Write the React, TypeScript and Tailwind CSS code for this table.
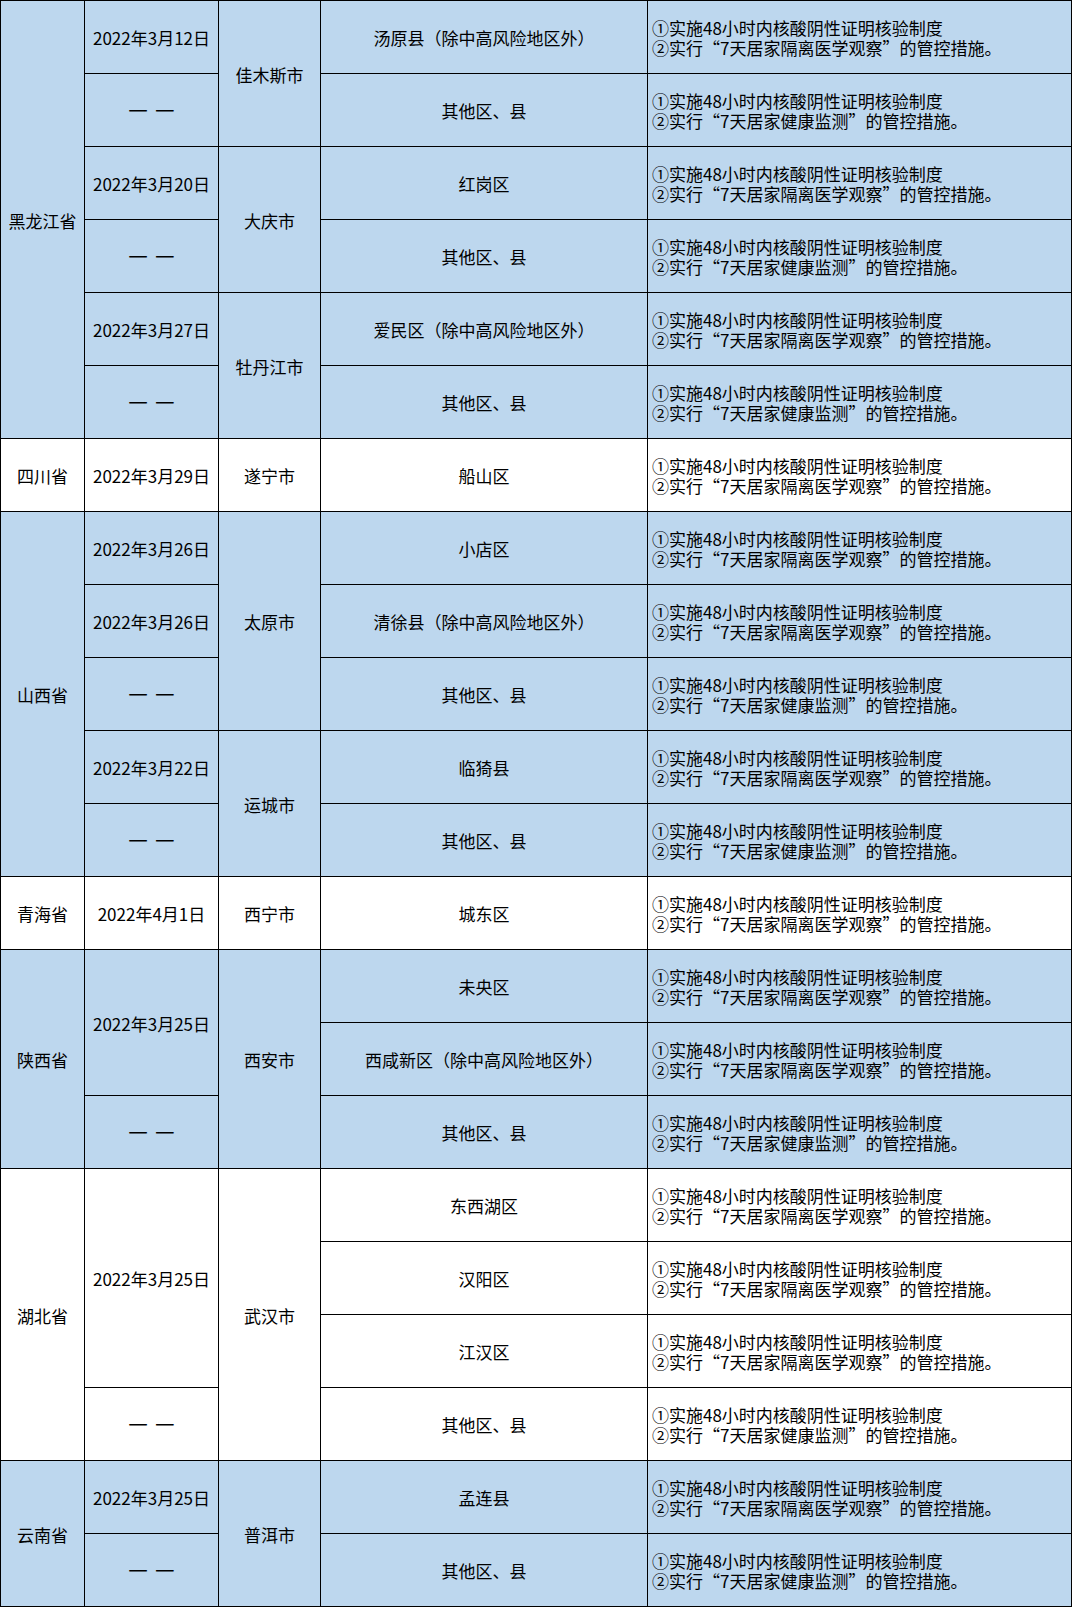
const A = ["①实施48小时内核酸阴性证明核验制度", "②实行“7天居家隔离医学观察”的管控措施。"];
const B = ["①实施48小时内核酸阴性证明核验制度", "②实行“7天居家健康监测”的管控措施。"];

type Cell = { text: string; rs?: number };
type Row = {
  white?: boolean;
  prov?: Cell;
  date?: Cell;
  city?: Cell;
  area: string;
  rule: string[];
};

const rows: Row[] = [
  { prov: { text: "黑龙江省", rs: 6 }, date: { text: "2022年3月12日" }, city: { text: "佳木斯市", rs: 2 }, area: "汤原县（除中高风险地区外）", rule: A },
  { date: { text: "——" }, area: "其他区、县", rule: B },
  { date: { text: "2022年3月20日" }, city: { text: "大庆市", rs: 2 }, area: "红岗区", rule: A },
  { date: { text: "——" }, area: "其他区、县", rule: B },
  { date: { text: "2022年3月27日" }, city: { text: "牡丹江市", rs: 2 }, area: "爱民区（除中高风险地区外）", rule: A },
  { date: { text: "——" }, area: "其他区、县", rule: B },
  { white: true, prov: { text: "四川省" }, date: { text: "2022年3月29日" }, city: { text: "遂宁市" }, area: "船山区", rule: A },
  { prov: { text: "山西省", rs: 5 }, date: { text: "2022年3月26日" }, city: { text: "太原市", rs: 3 }, area: "小店区", rule: A },
  { date: { text: "2022年3月26日" }, area: "清徐县（除中高风险地区外）", rule: A },
  { date: { text: "——" }, area: "其他区、县", rule: B },
  { date: { text: "2022年3月22日" }, city: { text: "运城市", rs: 2 }, area: "临猗县", rule: A },
  { date: { text: "——" }, area: "其他区、县", rule: B },
  { white: true, prov: { text: "青海省" }, date: { text: "2022年4月1日" }, city: { text: "西宁市" }, area: "城东区", rule: A },
  { prov: { text: "陕西省", rs: 3 }, date: { text: "2022年3月25日", rs: 2 }, city: { text: "西安市", rs: 3 }, area: "未央区", rule: A },
  { area: "西咸新区（除中高风险地区外）", rule: A },
  { date: { text: "——" }, area: "其他区、县", rule: B },
  { white: true, prov: { text: "湖北省", rs: 4 }, date: { text: "2022年3月25日", rs: 3 }, city: { text: "武汉市", rs: 4 }, area: "东西湖区", rule: A },
  { white: true, area: "汉阳区", rule: A },
  { white: true, area: "江汉区", rule: A },
  { white: true, date: { text: "——" }, area: "其他区、县", rule: B },
  { prov: { text: "云南省", rs: 2 }, date: { text: "2022年3月25日" }, city: { text: "普洱市", rs: 2 }, area: "孟连县", rule: A },
  { date: { text: "——" }, area: "其他区、县", rule: B },
];

const td = "border border-black text-center align-middle whitespace-nowrap p-0 pt-[2px]";

function CellText({ text }: { text: string }) {
  // 表格里的“——”是两段分开的短横
  if (text === "——") {
    return (
      <span className="inline-flex -translate-y-[3px] gap-[7px] text-[22px] leading-[20px]">
        <span>—</span>
        <span>—</span>
      </span>
    );
  }
  return <>{text}</>;
}

export default function App() {
  return (
    <div className="w-[1072px] bg-white font-['Noto_Sans_CJK_SC','Noto_Sans_CJK_JP',sans-serif] text-[17px] leading-[20px] text-black">
      <table className="w-[1071px] table-fixed border-collapse">
        <colgroup>
          <col className="w-[84px]" />
          <col className="w-[134px]" />
          <col className="w-[102px]" />
          <col className="w-[327px]" />
          <col className="w-[424px]" />
        </colgroup>
        <tbody>
          {rows.map((r, i) => (
            <tr key={i} className={`h-[73px] ${r.white ? "bg-white" : "bg-[#bdd7ee]"}`}>
              {r.prov && (
                <td rowSpan={r.prov.rs ?? 1} className={td}>
                  <CellText text={r.prov.text} />
                </td>
              )}
              {r.date && (
                <td rowSpan={r.date.rs ?? 1} className={td}>
                  <CellText text={r.date.text} />
                </td>
              )}
              {r.city && (
                <td rowSpan={r.city.rs ?? 1} className={td}>
                  <CellText text={r.city.text} />
                </td>
              )}
              <td className={td}>{r.area}</td>
              <td className="border border-black p-0 pl-[4px] pt-[2px] text-left align-middle whitespace-nowrap">
                <div>{r.rule[0]}</div>
                <div>{r.rule[1]}</div>
              </td>
            </tr>
          ))}
        </tbody>
      </table>
    </div>
  );
}
